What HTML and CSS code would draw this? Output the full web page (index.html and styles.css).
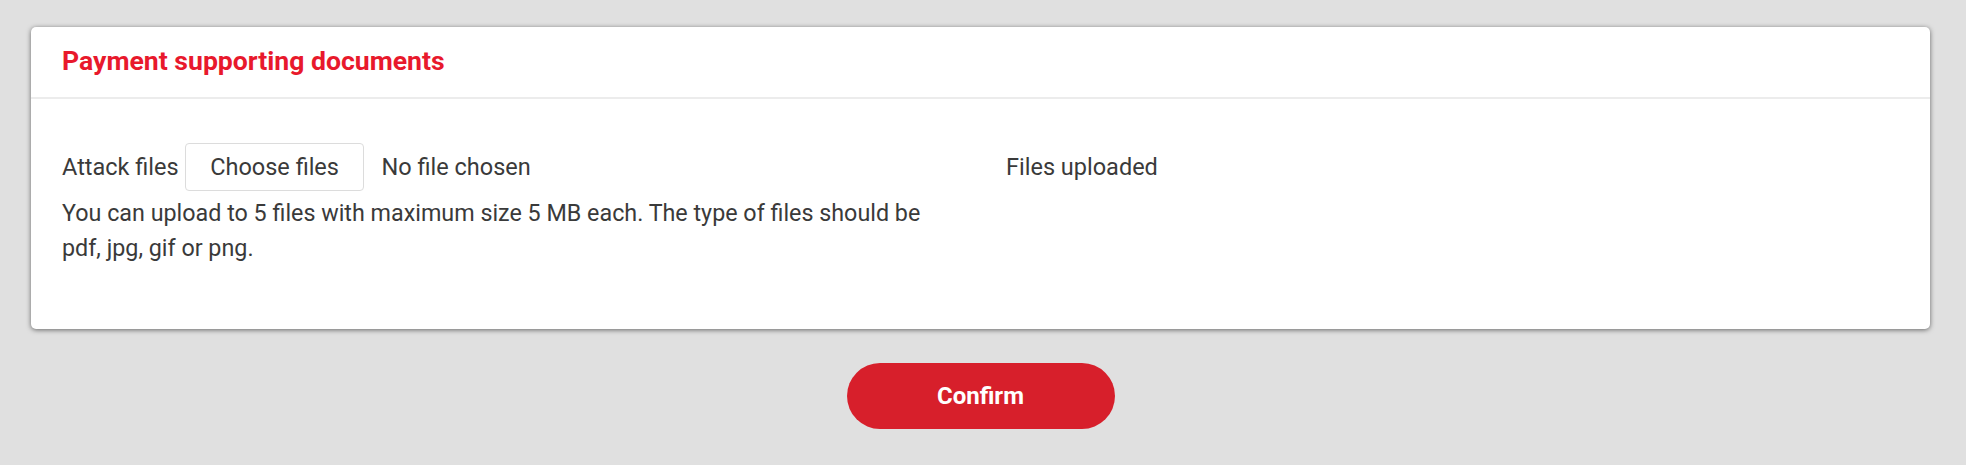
FILE: index.html
```html
<!DOCTYPE html>
<html lang="en">
<head>
<meta charset="utf-8">
<title>Payment supporting documents</title>
<link rel="stylesheet" href="styles.css">
</head>
<body>
<div class="page">
  <section class="card">
    <header class="card-header">
      <h2 class="card-title">Payment supporting documents</h2>
    </header>
    <div class="card-body">
      <div class="col">
        <div class="upload-line">
          <span class="label">Attack files</span>
          <button class="choose" type="button">Choose files</button>
          <span class="nofile">No file chosen</span>
        </div>
        <p class="hint">You can upload to 5 files with maximum size 5 MB each. The type of files should be pdf, jpg, gif or png.</p>
      </div>
      <div class="col">
        <div class="upload-line">
          <span class="label">Files uploaded</span>
        </div>
      </div>
    </div>
  </section>
  <div class="actions">
    <button class="confirm" type="button">Confirm</button>
  </div>
</div>
</body>
</html>
```

FILE: styles.css
```css
html, body {
  margin: 0;
  padding: 0;
}
body {
  background: #e0e0e0;
  font-family: Roboto, "Liberation Sans", Arial, sans-serif;
  color: #3a3a3a;
  height: 465px;
  overflow: hidden;
}
.page {
  padding: 27px 36px 0 31px;
}
.card {
  background: #fff;
  border-radius: 5px;
  box-shadow: 0 1px 5px rgba(0, 0, 0, 0.55);
}
.card-header {
  height: 70px;
  display: flex;
  align-items: center;
  padding: 0 31px;
  border-bottom: 2px solid #ececec;
}
.card-title {
  margin: 0 0 3px;
  font-size: 26.6px;
  font-weight: 700;
  color: #e8192c;
}
.card-body {
  display: grid;
  grid-template-columns: 1fr 1fr;
  column-gap: 51px;
  padding: 44px 31px 0;
  height: 230px;
  box-sizing: border-box;
}
.upload-line {
  display: flex;
  align-items: center;
  height: 48px;
  font-size: 23.5px;
}
.choose {
  height: 48px;
  margin-left: 6px;
  padding: 0 24.5px;
  background: #fff;
  border: 1px solid #dcdcdc;
  border-radius: 4px;
  font-family: inherit;
  font-size: 23.5px;
  color: #3a3a3a;
}
.nofile {
  margin-left: 17px;
}
.hint {
  margin: 5px 0 0;
  font-size: 23.3px;
  line-height: 35px;
}
.actions {
  display: flex;
  justify-content: center;
  margin-top: 34px;
}
.confirm {
  width: 268px;
  height: 66px;
  border: none;
  border-radius: 33px;
  background: #d71f2b;
  color: #fff;
  font-family: inherit;
  font-size: 24px;
  font-weight: 700;
}
```
